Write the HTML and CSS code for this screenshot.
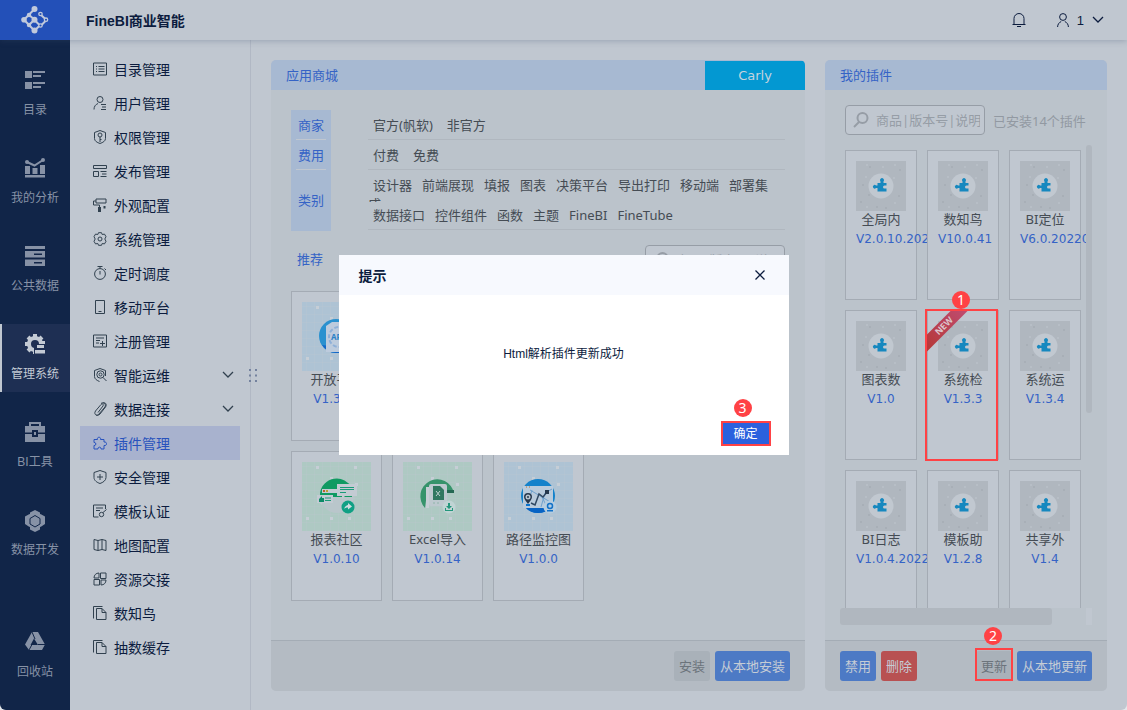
FILE: index.html
```
<!DOCTYPE html>
<html lang="zh-CN">

<head>
    <meta charset="UTF-8">
    <meta name="viewport" content="width=device-width, initial-scale=1.0">
    <title>FineBI商业智能</title>
    <link rel="stylesheet" href="styles.css">
</head>

<body>

    <!-- Shared icons -->
    <svg class="defs" width="0" height="0">
        <symbol id="i-doc" viewBox="0 0 14 14">
            <path d="M.5 12.5V.5h9M3.500 2.500h5.500l4 4v7h-9.500zM9 2.500v4h4" />
        </symbol>
        <symbol id="i-chevron" viewBox="0 0 12 8">
            <path d="M1 1l5 5 5-5" stroke-width="1.300" />
        </symbol>
        <symbol id="i-search" viewBox="0 0 18 18">
            <circle cx="10.500" cy="7" r="5" fill="none" stroke="currentColor" stroke-width="2" />
            <path d="M7 11l-5 5" fill="none" stroke="currentColor" stroke-width="2" />
        </symbol>
        <symbol id="i-plugin" viewBox="0 0 50 50">
            <rect width="50" height="50" fill="#b0b7bf" />
            <path fill="#a8afb7" d="M13 5h2v2h-2zM43 8h2v2h-2zM6 23h2v2H6zM4 40h2v2H4zM12 33h2v2h-2zM42 34h2v2h-2zM29 46h2v2h-2zM20 45h2v2h-2z" />
            <path fill="#b7bec6" d="M10 3h2v2h-2zM26 5h2v2h-2zM38 3h2v2h-2zM9 15h2v2H9zM38 41h2v2h-2zM10 45h2v2h-2zM37 16h2v2h-2z" />
            <circle cx="25" cy="25" r="12.500" fill="#c1c8d0" />
            <path fill="#1688bf" d="M21.500 22h3v-1.500a2 2 0 1 1 3 0V22h3v2.500h-2a1.500 1.500 0 0 0 0 3h2v3h-9V27h-1.500a1.800 1.800 0 1 1 0-2.500h1.500z" />
        </symbol>
        <symbol id="i-tile" viewBox="0 0 69 69">
            <rect width="69" height="69" fill="currentColor" />
            <path stroke="#c0c7d0" stroke-opacity=".25" d="M0 4.500h69M0 12.500h69M0 20.500h69M0 28.500h69M0 36.500h69M0 44.500h69M0 52.500h69M0 60.500h69M4.500 0v69M12.500 0v69M20.500 0v69M28.500 0v69M36.500 0v69M44.500 0v69M52.500 0v69M60.500 0v69" />
            <path fill="#c6ced6" d="M14 4h3v3h-3zM52 4h3v3h-3zM28 15h3v3h-3zM4 55h3v3H4zM28 55h3v3h-3zM46 55h3v3h-3zM53 21h3v3h-3z" />
        </symbol>
    </svg>

    <div class="app">

        <header class="topbar">
            <a class="logo" href="#" aria-label="FineBI">
                <svg width="28" height="28" viewBox="0 0 28 28">
                    <path d="M13.500 3L3 13.700l10.500 11 6-6M8 9l5.500 4.500L8 19M13.500 3l1 1M13.500 14l5 5M19.500 8.500l6 5.500-5 5" fill="none" stroke="#c0c9dc" stroke-width="2" />
                    <g fill="#c0c9dc">
                        <circle cx="13.500" cy="3" r="3" />
                        <circle cx="3" cy="13.700" r="2.800" />
                        <circle cx="13.500" cy="24.500" r="3" />
                        <circle cx="8" cy="9" r="2.200" />
                        <circle cx="8" cy="19" r="2.200" />
                        <circle cx="13.500" cy="13.700" r="3" />
                    </g>
                    <g fill="#2350b8" stroke="#c0c9dc" stroke-width="1.300">
                        <circle cx="19.500" cy="8" r="1.700" />
                        <circle cx="25" cy="13.700" r="1.700" />
                        <circle cx="19.500" cy="19.500" r="1.700" />
                    </g>
                </svg>
            </a>
            <h1>FineBI商业智能</h1>
            <div class="tools">
                <button class="tool" aria-label="消息">
                    <svg class="line" width="14" height="14" viewBox="0 0 14 14">
                        <path d="M.5 11.500h13M2 11.500V5.500a5 5 0 0 1 10 0v6M5 13.500h4" />
                    </svg>
                </button>
                <button class="tool user">
                    <svg class="line" width="12" height="14" viewBox="0 0 12 14">
                        <circle cx="6" cy="4" r="3.400" />
                        <path d="M.6 14c0-2.500 1.400-4.500 3.600-5.500M11.400 14c0-2.500-1.400-4.500-3.600-5.500" />
                    </svg>
                    1
                    <svg class="line" width="12" height="8"><use href="#i-chevron" /></svg>
                </button>
            </div>
        </header>

        <div class="body">

            <nav class="nav">
                <a href="#">
                    <svg width="20" height="20" viewBox="0 0 20 20">
                        <path d="M0 1h7v7H0zM8 1h12v2H8zM8 5h8v2H8zM0 12h7v7H0zM8 12h12v2H8zM8 16h8v2H8z" />
                    </svg>
                    目录
                </a>
                <a href="#">
                    <svg width="20" height="20" viewBox="0 0 20 20">
                        <path d="M0 8h5v8H0zM7.500 10h5v6h-5zM15 7h5v9h-5zM0 17h20v2.500H0z" />
                        <path d="M2 4l7.500 3.500L18 2" fill="none" stroke="currentColor" stroke-width="2" />
                        <circle cx="2" cy="4" r="2" />
                        <circle cx="18" cy="2" r="2" />
                    </svg>
                    我的分析
                </a>
                <a href="#">
                    <svg width="20" height="20" viewBox="0 0 20 20">
                        <path fill-rule="evenodd" d="M0 0h20v3H0zM0 5h20v6.500H0zM9 7.500h8V9H9zM0 13.500h20V20H0zM9 16h8v1.500H9z" />
                    </svg>
                    公共数据
                </a>
                <a href="#" class="active">
                    <svg width="20" height="20" viewBox="0 0 20 20">
                        <circle cx="10" cy="10" r="6" fill="none" stroke="currentColor" stroke-width="4" />
                        <path d="M10 0v4M10 16v4M0 10h4M3 3l3 3M3 17l3-3M17 3l-3 3M16.500 9H20" stroke="currentColor" stroke-width="4" />
                        <path fill="#1e2f53" d="M9 10h11v10H9z" />
                        <path d="M12 11h7v3h-7zM10 16h10v3.500H10z" />
                    </svg>
                    管理系统
                </a>
                <a href="#">
                    <svg width="20" height="20" viewBox="0 0 20 20">
                        <path d="M5 4V1h10v3" fill="none" stroke="currentColor" stroke-width="2" />
                        <path fill-rule="evenodd" d="M0 4h20v6.500h-7V8H7v2.500H0zM0 12h7v3h6v-3h7v8H0zM9 10h2v3H9z" />
                    </svg>
                    BI工具
                </a>
                <a href="#">
                    <svg width="20" height="22" viewBox="0 0 20 22">
                        <path d="M10 0l5 2.500v4H5v-4zM4.500 4l5 3v6l-5 4L0 14V6.500zM15.500 4L20 6.500V14l-4.500 3-5-4V7zM5 15h10v4.500L10 22l-5-2.500z" />
                        <path d="M10 5.500l5 3v5.500l-5 3-5-3V8.500z" stroke="#112548" />
                    </svg>
                    数据开发
                </a>
                <a href="#" class="bottom">
                    <svg width="20" height="18" viewBox="0 0 20 18">
                        <path fill-rule="evenodd" d="M7 0h6l7 12.500L17 18H4l-4-5.500zM9 6.500L5.500 13H13z" />
                        <path fill="none" stroke="#112548" d="M7 0l3 7M4 18l3-5.500M20 12.500h-7" />
                    </svg>
                    回收站
                </a>
            </nav>

            <aside class="sidebar">
                <a href="#"><svg class="line" width="14" height="14" viewBox="0 0 14 14"><path d="M.5 1h13v12H.5zM3 4.500h1M5.500 4.500h6M3 7h1M5.500 7h6M3 9.500h1M5.500 9.500h6" /></svg>目录管理</a>
                <a href="#"><svg class="line" width="14" height="14" viewBox="0 0 14 14"><circle cx="7" cy="3.500" r="3" /><path d="M1 13.500c0-3 1.500-5 4-6M8 8.500h5M9 11h4M8 13.500h5" /></svg>用户管理</a>
                <a href="#"><svg class="line" width="14" height="14" viewBox="0 0 14 14"><path d="M7 .5l5.500 2v6c0 2.500-2.500 4-5.500 5-3-1-5.500-2.500-5.500-5v-6zM7 7v5M7 9.500h1.500" /><circle cx="7" cy="5" r="2" /></svg>权限管理</a>
                <a href="#"><svg class="line" width="14" height="14" viewBox="0 0 14 14"><path d="M.5 1.500h13v3H.5zM.5 7.500h5v5h-5zM7.500 7.500h6M9 10h4.500M7.500 12.500h6" /></svg>发布管理</a>
                <a href="#"><svg class="line" width="14" height="14" viewBox="0 0 14 14"><path d="M3 1h10v4H3zM3 3H.5v4h6v3" /><path d="M6.500 9v5" stroke-width="3" /><path d="M11.500 8v2.500" stroke-width="2" /></svg>外观配置</a>
                <a href="#"><svg class="line" width="14" height="14" viewBox="0 0 14 14"><path d="M5.500.7h3L9.200 2.500l2.300-.4 1.500 2.600L11.800 7 13 9.300l-1.500 2.600-2.300-.4-.7 1.800h-3l-.7-1.800-2.300.4L1 9.300 2.200 7 1 4.700l1.500-2.600 2.300.4z" /><circle cx="7" cy="7" r="2" /></svg>系统管理</a>
                <a href="#"><svg class="line" width="14" height="14" viewBox="0 0 14 14"><circle cx="7" cy="8" r="5.400" /><path d="M4.500.5h5M7 .5v2M7 5v3.500M11.500 2.500L13 4" /></svg>定时调度</a>
                <a href="#"><svg class="line" width="14" height="14" viewBox="0 0 14 14"><path d="M2.500.5h9v13h-9zM5.500 11.500h3" /></svg>移动平台</a>
                <a href="#"><svg class="line" width="14" height="14" viewBox="0 0 14 14"><path d="M.5 1h13v12H.5zM3 4h8M3 6.500h4M3 9h3M7 9.500h5M9.500 7v5" /></svg>注册管理</a>
                <a href="#"><svg class="line" width="14" height="14" viewBox="0 0 14 14"><path d="M12.500 8V2.500L7 .5l-5.500 2v6c0 2.500 2.500 4 5 5M10 9.500l3.500 3.500" /><circle cx="7.500" cy="6.500" r="3.700" /><circle cx="7.500" cy="6.500" r="1.500" /></svg>智能运维<svg class="line arrow" width="12" height="8"><use href="#i-chevron" /></svg></a>
                <a href="#"><svg class="line" width="14" height="14" viewBox="0 0 14 14"><path d="M5 10.500l5-6.500c1-2-1-3-2-1.500L2.500 9c-2 3 1 5.500 3 3.500L12 5c1.500-3-1.500-5.500-4-3.500M10 1c3-1 4 2 2.500 4L7 12c-1.500 1.500-3 1.500-4 1" /></svg>数据连接<svg class="line arrow" width="12" height="8"><use href="#i-chevron" /></svg></a>
                <a href="#" class="active"><svg class="line" width="14" height="14" viewBox="0 0 14 14"><path d="M1 3.500h3.500C3.500.5 8.500.5 7.500 3.500H11V6c3.500-.5 3.500 4 0 3.500V13H8c.5-2.500-3.500-2.500-3 0H1V9.500c2.500.5 2.500-3.500 0-3z" /></svg>插件管理</a>
                <a href="#"><svg class="line" width="14" height="14" viewBox="0 0 14 14"><path d="M7 .5l6 2v5c0 3-3 5-6 6-3-1-6-3-6-6v-5zM7 4v6M4 7h6" /></svg>安全管理</a>
                <a href="#"><svg class="line" width="14" height="14" viewBox="0 0 14 14"><path d="M12.500 5V1H.5v12h5M3 4h7M3 6.500h4M10 8.500l3.500-3" /><circle cx="8.500" cy="10.500" r="2.200" /></svg>模板认证</a>
                <a href="#"><svg class="line" width="14" height="14" viewBox="0 0 14 14"><path d="M1 1.500l4 1 4-1 4 1v10l-4-1-4 1-4-1zM5 2.500v10M9 1.500v10" /></svg>地图配置</a>
                <a href="#"><svg class="line" width="14" height="14" viewBox="0 0 14 14"><path d="M7.500 1H13v5.500H7.500zM1 7.500h5.500V13H1zM1 6c0-3 2-5 5-5v5zM13 8c0 3-2 5-5 5V8z" /></svg>资源交接</a>
                <a href="#"><svg class="line" width="14" height="14"><use href="#i-doc" /></svg>数知鸟</a>
                <a href="#"><svg class="line" width="14" height="14"><use href="#i-doc" /></svg>抽数缓存</a>
                <svg class="grip" width="8" height="13" viewBox="0 0 8 13">
                    <path d="M0 0h2v2H0zM6 0h2v2H6zM0 5.500h2v2H0zM6 5.500h2v2H6zM0 11h2v2H0zM6 11h2v2H6z" />
                </svg>
            </aside>

            <main class="main">

                <section class="panel store">
                    <div class="panel-head">
                        <h2>应用商城</h2>
                        <button class="account">Carly</button>
                    </div>
                    <div class="store-body">
                        <div class="filter">
                            <div class="filter-names">
                                <span>商家</span>
                                <span>费用</span>
                                <span class="tall">类别</span>
                            </div>
                            <div class="filter-options">
                                <div class="options wide"><a href="#">官方(帆软)</a><a href="#">非官方</a></div>
                                <div class="options wide"><a href="#">付费</a><a href="#">免费</a></div>
                                <div class="options plain">
                                    <a href="#">设计器</a><a href="#">前端展现</a><a href="#">填报</a><a href="#">图表</a><a href="#">决策平台</a><a href="#">导出打印</a><a href="#">移动端</a><a href="#">部署集</a>
                                    <span class="cut">成</span>
                                </div>
                                <div class="options"><a href="#">数据接口</a><a href="#">控件组件</a><a href="#">函数</a><a href="#">主题</a><a href="#">FineBI</a><a href="#">FineTube</a></div>
                            </div>
                        </div>
                        <div class="store-bar">
                            <h3>推荐</h3>
                            <label class="search">
                                <svg width="18" height="18"><use href="#i-search" /></svg>
                                <input type="text" placeholder="商品|版本号|说明" aria-label="搜索商城">
                            </label>
                        </div>
                        <div class="goods">
                            <div class="card">
                                <svg class="pic blue" width="69" height="69" viewBox="0 0 69 69">
                                    <use href="#i-tile" />
                                    <circle cx="34" cy="34" r="17" fill="#2a91cf" />
                                    <path fill="#1467c8" d="M20 43a17 17 0 0 0 14 8h8v-5z" />
                                    <path fill="#bdcbdd" d="M24 24l6-4h22v30H24z" />
                                    <circle cx="37" cy="35" r="10" fill="none" stroke="#8fb0d8" stroke-width="2" stroke-dasharray="4 2" />
                                    <text x="29" y="38" font-size="8" font-weight="bold" fill="#2a82c8">API</text>
                                </svg>
                                <span class="name">开放平台</span>
                                <span class="version">V1.3.10</span>
                            </div>
                        </div>
                        <div class="goods">
                            <div class="card">
                                <svg class="pic green" width="69" height="69" viewBox="0 0 69 69">
                                    <use href="#i-tile" />
                                    <circle cx="35" cy="34" r="17" fill="#b9c6cb" />
                                    <path fill="#109a62" d="M18 31a17 17 0 0 1 32-5v9H18z" />
                                    <path fill="#c3cbd3" d="M20 27h16v4H20zM35 22h20v12H43l-3 3v-3h-5zM15 33h16v8H20v2l-2-2h-3z" />
                                    <path fill="none" stroke="#1a9b78" d="M38 25.500h14M38 27.500h14M38 30.500h6M23 36h6M23 38.500h6" />
                                    <path fill="#0d8b68" d="M17 37l3-3v2h2v4h-5z" />
                                    <path fill="#b9622d" d="M21 28h2v2h-2z" />
                                    <path fill="#bba22e" d="M24 28h2v2h-2z" />
                                    <circle cx="46" cy="45" r="6.500" fill="#10a084" />
                                    <path fill="#d0dce0" d="M42 47c1-3 3-4 4-4v-2l4 3.500-4 3v-2c-2 0-3 .5-4 1.500z" />
                                </svg>
                                <span class="name">报表社区</span>
                                <span class="version">V1.0.10</span>
                            </div>
                            <div class="card">
                                <svg class="pic green" width="69" height="69" viewBox="0 0 69 69">
                                    <use href="#i-tile" />
                                    <path fill="#36936b" d="M22 46a17 17 0 1 1 29-15H24z" />
                                    <path fill="#256853" d="M42 28h9v3h-9z" />
                                    <path fill="#c6ced5" d="M23 25h3v21h-3z" />
                                    <rect x="26" y="22" width="18" height="22" rx="2" fill="#bdc9cf" />
                                    <path fill="#307760" d="M30 24h7l4 4v10H30z" />
                                    <path d="M33 29l4 5M37 29l-4 5" stroke="#bdd0cf" />
                                    <path stroke="#8eb5aa" stroke-dasharray="2 2" d="M30 41h8" />
                                    <circle cx="46" cy="45" r="6.500" fill="#c0d4d4" />
                                    <path fill="#23977b" d="M45 41h2v3h2l-3 3-3-3h2zM42 46h1v2h6v-2h1v3h-8z" />
                                </svg>
                                <span class="name">Excel导入</span>
                                <span class="version">V1.0.14</span>
                            </div>
                            <div class="card">
                                <svg class="pic blue" width="69" height="69" viewBox="0 0 69 69">
                                    <use href="#i-tile" />
                                    <circle cx="34" cy="34" r="17" fill="#1482cb" />
                                    <path fill="#0863c4" d="M19 42a17 17 0 0 0 30 0z" />
                                    <path fill="#b9cbdc" d="M19 24h30v22H19z" />
                                    <path d="M22 25h1M25 25h1" stroke="#b97a3a" />
                                    <path fill="none" stroke="#6fa2cf" d="M26 28l22 13M37 45l4-14 7-4M28 28l-3 10M43 45l-5-10" />
                                    <path fill="none" stroke="#304862" stroke-width="1.500" d="M27 41l4 2 4-11 4 3 4-5" />
                                    <path fill="#26384d" d="M24 42c-2-3-4-5-4-7a4 4 0 0 1 8 0c0 2-2 4-4 7zM41 28h4v4h-4z" />
                                    <circle cx="24" cy="35" r="2.500" fill="#b9c5d0" />
                                    <circle cx="24" cy="35" r="1" fill="#26384d" />
                                    <path fill="#0a73cd" d="M22 42h4v2h-4z" />
                                    <circle cx="46" cy="45" r="6.500" fill="#b5cde0" />
                                    <circle cx="46" cy="44" r="2.500" fill="none" stroke="#1271c8" stroke-width="1.500" />
                                    <path fill="#1271c8" d="M43 48h6v1.500h-6z" />
                                </svg>
                                <span class="name">路径监控图</span>
                                <span class="version">V1.0.0</span>
                            </div>
                        </div>
                    </div>
                    <div class="panel-foot">
                        <button class="btn push" disabled>安装</button>
                        <button class="btn primary">从本地安装</button>
                    </div>
                </section>

                <section class="panel mine">
                    <div class="panel-head">
                        <h2>我的插件</h2>
                    </div>
                    <div class="mine-bar">
                        <label class="search">
                            <svg width="18" height="18"><use href="#i-search" /></svg>
                            <input type="text" placeholder="商品|版本号|说明" aria-label="搜索插件">
                        </label>
                        <span class="count">已安装14个插件</span>
                    </div>
                    <div class="scroller">
                        <div class="plugins">
                            <div class="card small"><svg class="pic" width="50" height="50"><use href="#i-plugin" /></svg><span class="name">全局内</span><span class="version">V2.0.10.202</span></div>
                            <div class="card small"><svg class="pic" width="50" height="50"><use href="#i-plugin" /></svg><span class="name">数知鸟</span><span class="version">V10.0.41</span></div>
                            <div class="card small"><svg class="pic" width="50" height="50"><use href="#i-plugin" /></svg><span class="name">BI定位</span><span class="version">V6.0.20220</span></div>
                            <div class="card small"><svg class="pic" width="50" height="50"><use href="#i-plugin" /></svg><span class="name">图表数</span><span class="version">V1.0</span></div>
                            <div class="card small marked">
                                <svg class="pic" width="50" height="50"><use href="#i-plugin" /></svg><span class="name">系统检</span><span class="version">V1.3.3</span>
                                <div class="corner"><span class="ribbon">NEW</span></div>
                                <span class="step step-1">1</span>
                            </div>
                            <div class="card small"><svg class="pic" width="50" height="50"><use href="#i-plugin" /></svg><span class="name">系统运</span><span class="version">V1.3.4</span></div>
                            <div class="card small"><svg class="pic" width="50" height="50"><use href="#i-plugin" /></svg><span class="name">BI日志</span><span class="version">V1.0.4.2022</span></div>
                            <div class="card small"><svg class="pic" width="50" height="50"><use href="#i-plugin" /></svg><span class="name">模板助</span><span class="version">V1.2.8</span></div>
                            <div class="card small"><svg class="pic" width="50" height="50"><use href="#i-plugin" /></svg><span class="name">共享外</span><span class="version">V1.4</span></div>
                        </div>
                        <div class="track-y"><div class="thumb-y"></div></div>
                        <div class="track-x"><div class="thumb-x"></div></div>
                        <div class="track-end"></div>
                    </div>
                    <div class="panel-foot">
                        <button class="btn primary">禁用</button>
                        <button class="btn danger">删除</button>
                        <span class="update push">
                            <button class="btn" disabled>更新</button>
                            <span class="step step-2">2</span>
                        </span>
                        <button class="btn primary">从本地更新</button>
                    </div>
                </section>

            </main>
        </div>
    </div>

    <div class="mask">
        <div class="dialog" role="dialog" aria-labelledby="dialog-title">
            <div class="dialog-head">
                <h2 id="dialog-title">提示</h2>
                <button class="close" aria-label="关闭">
                    <svg class="line" width="10" height="10" viewBox="0 0 10 10"><path d="M.5.500l9 9M9.500.500l-9 9" stroke-width="1.300" /></svg>
                </button>
            </div>
            <p>Html解析插件更新成功</p>
            <div class="dialog-foot">
                <button class="confirm">确定</button>
                <span class="step step-3">3</span>
            </div>
        </div>
    </div>

</body>

</html>
```
FILE: styles.css
```
* {
    box-sizing: border-box;
}

body {
    margin: 0;
    background-color: #e4e7ea;
    color: #0c1c3e;
    font-family: "Liberation Sans", "Noto Sans CJK SC", sans-serif;
    font-size: 14px;
}

h1, h2, h3, p {
    margin: 0;
    font-size: 14px;
}

a {
    color: inherit;
    text-decoration: none;
}

button {
    padding: 0;
    border: none;
    background: none;
    color: inherit;
    font-family: inherit;
    font-size: 13px;
}

.defs {
    position: absolute;
}

.line {
    fill: none;
    stroke: currentColor;
}

.app {
    display: flex;
    flex-direction: column;
    height: 100vh;
    background-color: #c0c7d0;
    border-radius: 0 0 6px 6px;
    overflow: hidden;
}

/* Top bar */
.topbar {
    display: flex;
    align-items: center;
    height: 40px;
    flex-shrink: 0;
    box-shadow: 0 1px 6px rgba(60, 75, 105, 0.3);
    z-index: 1;
}

.logo {
    display: flex;
    align-items: center;
    justify-content: center;
    width: 70px;
    height: 40px;
    background-color: #2350b8;
}

.topbar h1 {
    margin-left: 16px;
}

.tools {
    display: flex;
    gap: 31px;
    margin-left: auto;
    padding-right: 23px;
}

.tool {
    display: flex;
    align-items: center;
    gap: 8px;
}

/* Main navigation */
.body {
    display: flex;
    flex: 1;
    min-height: 0;
}

.nav {
    display: flex;
    flex-direction: column;
    gap: 20px;
    width: 70px;
    padding: 20px 0;
    background-color: #112548;
    color: #8792a6;
    font-size: 12px;
    line-height: 18px;
}

.nav a {
    display: flex;
    flex-direction: column;
    align-items: center;
    justify-content: space-between;
    height: 68px;
    padding: 10px 0 9px;
    border-left: 2px solid transparent;
    border-right: 2px solid transparent;
}

.nav svg {
    fill: currentColor;
}

.nav .active {
    border-left-color: #c0c7d0;
    background-color: #1e2f53;
    color: #c3cad4;
}

.nav .bottom {
    margin-top: auto;
}

/* Menu */
.sidebar {
    position: relative;
    width: 181px;
    padding: 12px 10px;
    border-right: 1px solid #b1b8c4;
}

.sidebar a {
    display: flex;
    align-items: center;
    gap: 7px;
    height: 34px;
    padding: 0 6px 1px 13px;
}

.sidebar a .line {
    color: #31414f;
}

.sidebar .arrow {
    margin-left: auto;
}

.sidebar .active,
.sidebar .active .line {
    color: #2852bd;
}

.sidebar .active {
    background-color: #a8b2ce;
}

.grip {
    position: absolute;
    top: 329px;
    right: -7px;
    fill: #74829e;
}

/* Panels */
.main {
    display: flex;
    flex: 1;
    gap: 20px;
    min-width: 0;
    padding: 20px 20px 19px;
    color: #454c54;
    font-family: "Noto Sans", "Noto Sans CJK SC", sans-serif;
    font-size: 13px;
}

.panel {
    display: flex;
    flex-direction: column;
    background-color: #bbc3cb;
    border-radius: 5px;
    overflow: hidden;
}

.store {
    flex: 1;
    min-width: 0;
}

.mine {
    width: 282px;
}

.panel-head {
    display: flex;
    justify-content: space-between;
    height: 30px;
    flex-shrink: 0;
    padding-left: 15px;
    background-color: #a7b9d2;
    color: #3563c6;
    line-height: 30px;
}

.panel-head h2,
.store-bar h3 {
    font-size: 13px;
    font-weight: normal;
}

.account {
    width: 100px;
    margin-top: 1px;
    background-color: #0398d2;
    color: #c5d3de;
    font-family: "DejaVu Sans", sans-serif;
}

.panel-foot {
    display: flex;
    align-items: center;
    gap: 5px;
    height: 51px;
    flex-shrink: 0;
    padding: 0 15px;
    border-top: 1px solid #a4acb5;
    background-color: #b4bbc3;
}

.btn {
    height: 30px;
    padding: 0 5px;
    border-radius: 3px;
    background-color: #a9b1b9;
    color: #c5ccd5;
    line-height: 30px;
}

.btn:disabled {
    color: #6c747c;
}

.primary {
    background-color: #4d7ac5;
}

.danger {
    background-color: #b85152;
}

.push {
    margin-left: auto;
}

/* Store */
.store-body {
    flex: 1;
    padding: 20px;
    min-height: 0;
    overflow: hidden;
}

.filter {
    display: flex;
    gap: 37px;
    line-height: 30px;
}

.filter-names {
    display: flex;
    flex-direction: column;
    width: 40px;
    padding: 0 5px;
    background-color: #a7b9d2;
    color: #3563c6;
    text-align: center;
}

.filter-names span {
    height: 30px;
    border-bottom: 1px solid #c0c7d0;
}

.filter-names .tall {
    height: 61px;
    border: none;
    line-height: 60px;
}

.filter-options {
    flex: 1;
}

.options {
    position: relative;
    display: flex;
    gap: 10px;
    height: 30px;
    padding-left: 5px;
    border-bottom: 1px solid #b0b7bf;
    white-space: nowrap;
}

.wide {
    gap: 14px;
}

.plain {
    border-color: transparent;
}

.cut {
    position: absolute;
    top: 27px;
    left: 0;
    height: 5px;
    line-height: 15px;
    overflow: hidden;
}

.store-bar {
    display: flex;
    justify-content: space-between;
    margin: 14px 0 16px;
    padding-left: 6px;
    color: #3563c6;
    line-height: 28px;
}

.search {
    display: flex;
    align-items: center;
    gap: 6px;
    width: 140px;
    height: 30px;
    padding: 0 4px 0 6px;
    border: 1px solid #969da6;
    border-radius: 4px;
    background-color: #c0c7d0;
    color: #969da6;
}

.search svg {
    flex-shrink: 0;
}

.search input {
    width: 100%;
    min-width: 0;
    padding: 0;
    border: none;
    outline: none;
    background: none;
    color: inherit;
    font-family: inherit;
    font-size: 13px;
}

.search input::placeholder {
    color: #969da6;
}

.goods {
    display: flex;
    gap: 10px;
    margin-bottom: 10px;
}

.card {
    position: relative;
    width: 91px;
    height: 150px;
    padding: 10px;
    border: 1px solid #a4abb4;
    background-color: #c0c7d0;
    text-align: center;
    white-space: nowrap;
}

.small {
    width: 72px;
}

.pic,
.name,
.version {
    display: block;
}

.blue {
    color: #aec3d4;
}

.green {
    color: #aec9c3;
}

.name {
    line-height: 16px;
}

.version {
    color: #3563c6;
    font-family: "DejaVu Sans", sans-serif;
    font-size: 12px;
    line-height: 24px;
}

/* Installed plugins */
.mine-bar {
    display: flex;
    align-items: center;
    gap: 8px;
    padding: 15px 20px 10px;
    color: #9299a2;
    white-space: nowrap;
}

.scroller {
    display: grid;
    grid-template-columns: 1fr 6px;
    grid-template-rows: 1fr 17px;
    flex: 1;
    min-height: 0;
    margin: 0 15px 15px;
}

.plugins {
    display: grid;
    grid-template-columns: repeat(3, 72px);
    grid-auto-rows: 150px;
    gap: 10px;
    padding: 5px;
    overflow: hidden;
}

.thumb-y {
    width: 6px;
    height: 268px;
    border-radius: 3px;
    background-color: #b0b7bf;
}

.thumb-x {
    width: 212px;
    height: 17px;
    border-radius: 3px;
    background-color: #b0b7bf;
}

.track-end {
    background-color: #c0c7d0;
}

.corner {
    position: absolute;
    top: -1px;
    left: -1px;
    width: 50px;
    height: 50px;
    overflow: hidden;
}

.ribbon {
    position: absolute;
    top: 10px;
    left: -18px;
    width: 70px;
    height: 12px;
    background: linear-gradient(to right, #b43531, #c04f78);
    color: #dbc5cc;
    font-size: 9px;
    font-weight: bold;
    line-height: 12px;
    transform: rotate(-45deg);
}

/* Numbered steps */
.marked::after,
.update::after {
    content: "";
    position: absolute;
    border: 2px solid #ff4245;
}

.marked::after {
    top: -2px;
    right: 0;
    bottom: -2px;
    left: -3px;
}

.update {
    position: relative;
}

.update::after {
    top: -3px;
    right: -1px;
    bottom: 0;
    left: -1px;
}

.step {
    position: absolute;
    width: 18px;
    height: 18px;
    border-radius: 50%;
    background-color: #ff4245;
    color: #ffffff;
    font-family: "Noto Sans", sans-serif;
    font-size: 14px;
    line-height: 18px;
    text-align: center;
}

.step-1 {
    top: -20px;
    left: 24px;
}

.step-2 {
    top: -24px;
    left: 8px;
}

.step-3 {
    top: -22px;
    right: 37px;
}

/* Dialog */
.mask {
    position: fixed;
    inset: 0;
    display: flex;
    align-items: center;
    justify-content: center;
    z-index: 2;
}

.dialog {
    display: flex;
    flex-direction: column;
    width: 450px;
    height: 200px;
    background-color: #ffffff;
}

.dialog-head {
    display: flex;
    align-items: center;
    justify-content: space-between;
    height: 40px;
    padding: 0 24px 0 20px;
    background-color: #f7f9fe;
}

.close {
    display: flex;
}

.dialog p {
    flex: 1;
    padding-top: 49px;
    font-size: 12px;
    line-height: 20px;
    text-align: center;
}

.dialog-foot {
    position: relative;
    display: flex;
    justify-content: flex-end;
    padding: 0 18px 9px;
}

.confirm {
    width: 50px;
    height: 25px;
    border: 2px solid #ff4245;
    background-color: #2b61de;
    color: #ffffff;
    font-size: 12px;
    line-height: 20px;
}
```
